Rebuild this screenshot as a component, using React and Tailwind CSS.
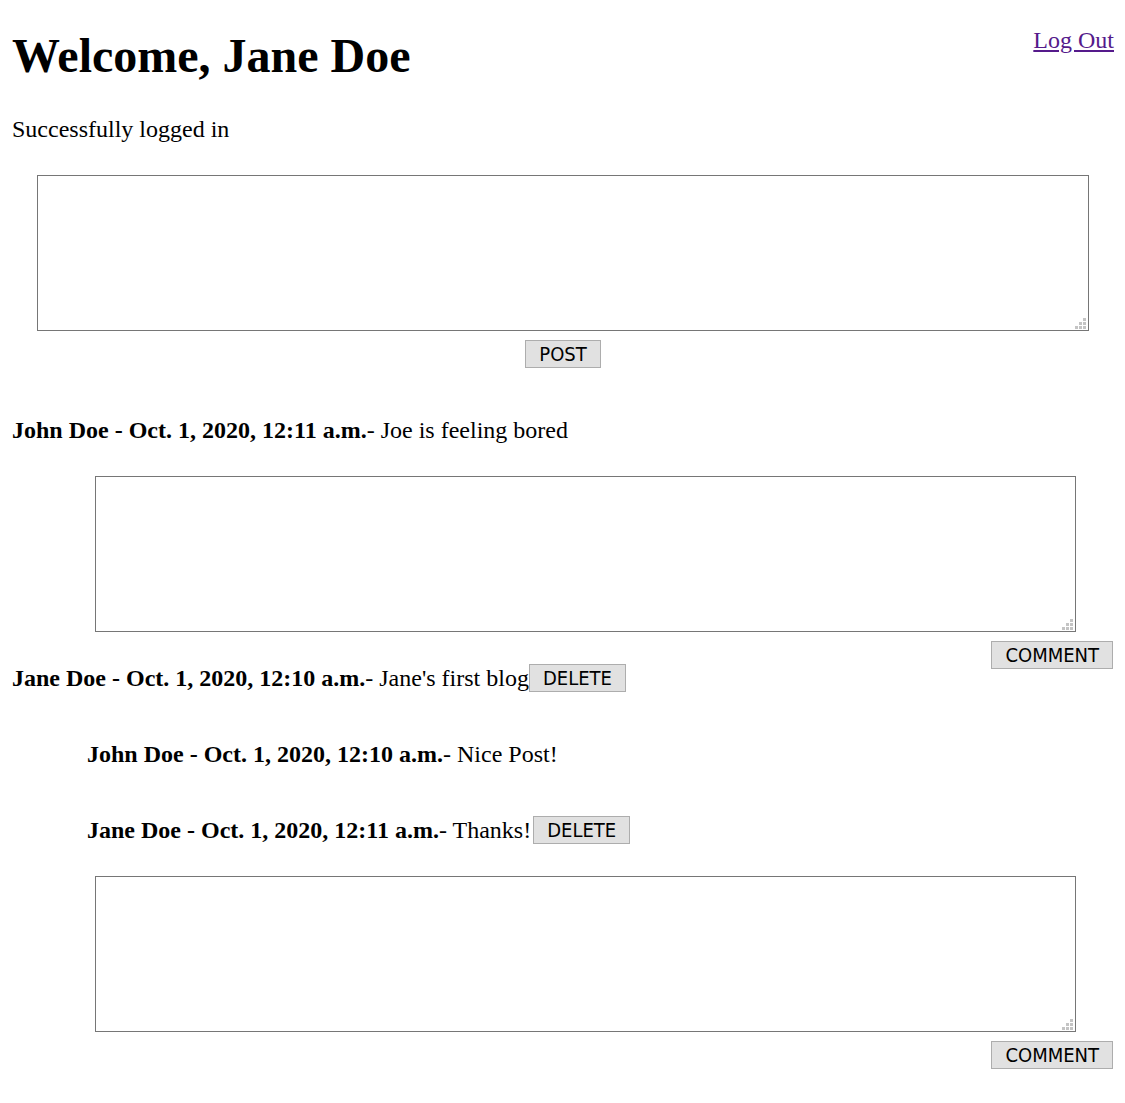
import React, { useState } from 'react';

const btnFont = { fontFamily: '"DejaVu Sans Condensed", "Liberation Sans", sans-serif' };

function Grip() {
  // little dotted resize grip in the corner of the textarea
  return (
    <svg className="absolute right-[3px] bottom-[2px] pointer-events-none" width="11" height="11" viewBox="0 0 11 11">
      <rect x="8" y="0" width="3" height="3" fill="#c4c4c4" />
      <rect x="4" y="4" width="3" height="3" fill="#c4c4c4" />
      <rect x="8" y="4" width="3" height="3" fill="#c4c4c4" />
      <rect x="0" y="8" width="3" height="3" fill="#c4c4c4" />
      <rect x="4" y="8" width="3" height="3" fill="#c4c4c4" />
      <rect x="8" y="8" width="3" height="3" fill="#c4c4c4" />
    </svg>
  );
}

function Box({ className }) {
  const [text, setText] = useState('');
  return (
    <div className={`relative ${className}`}>
      <textarea
        value={text}
        onChange={e => setText(e.target.value)}
        className="block w-full h-full border border-[#767676] bg-white resize-none outline-none p-1 text-[20px]"
      />
      <Grip />
    </div>
  );
}

function Btn({ children, className = '' }) {
  return (
    <button
      type="button"
      className={`h-[28px] px-[13px] bg-[#e1e1e1] border border-[#adadad] text-black text-[20px] leading-none ${className}`}
      style={btnFont}
    >
      {children}
    </button>
  );
}

function Entry({ author, date, text, canDelete, indent, gap }) {
  return (
    <div className={`flex items-center h-[28px] ${indent ? 'ml-[75px]' : ''}`}>
      <span className="leading-[27px] whitespace-pre">
        <b>{author} - {date}</b>- {text}
      </span>
      {canDelete && <Btn className={gap ? 'ml-[2px]' : ''}>DELETE</Btn>}
    </div>
  );
}

export default function App() {
  return (
    <div className="min-h-screen bg-white text-black p-3 text-[24px]" style={{ fontFamily: '"Liberation Serif", "Times New Roman", serif' }}>
      <div className="flex justify-between items-start">
        <h1 className="mt-[17px] text-[48px] font-bold leading-[53px]">Welcome, Jane Doe</h1>
        <a href="#" className="mt-[15px] mr-[-1px] leading-[27px] text-[#551a8b] underline">Log Out</a>
      </div>

      <p className="mt-[34px] leading-[27px]">Successfully logged in</p>

      <Box className="mt-[32px] ml-[25px] w-[1052px] h-[156px]" />
      <div className="mt-[9px] ml-[25px] w-[1052px] flex justify-center">
        <Btn>POST</Btn>
      </div>

      <div className="mt-[48px]">
        <Entry author="John Doe" date="Oct. 1, 2020, 12:11 a.m." text="Joe is feeling bored" />
      </div>
      <Box className="mt-[32px] ml-[83px] w-[981px] h-[156px]" />
      <div className="mt-[9px] flex justify-end">
        <Btn className="px-[12.5px]">COMMENT</Btn>
      </div>

      <div className="-mt-[5px]">
        <Entry author="Jane Doe" date="Oct. 1, 2020, 12:10 a.m." text="Jane's first blog" canDelete />
      </div>
      <div className="mt-[48px]">
        <Entry indent author="John Doe" date="Oct. 1, 2020, 12:10 a.m." text="Nice Post!" />
      </div>
      <div className="mt-[48px]">
        <Entry indent gap author="Jane Doe" date="Oct. 1, 2020, 12:11 a.m." text="Thanks!" canDelete />
      </div>
      <Box className="mt-[32px] ml-[83px] w-[981px] h-[156px]" />
      <div className="mt-[9px] flex justify-end">
        <Btn className="px-[12.5px]">COMMENT</Btn>
      </div>
    </div>
  );
}
